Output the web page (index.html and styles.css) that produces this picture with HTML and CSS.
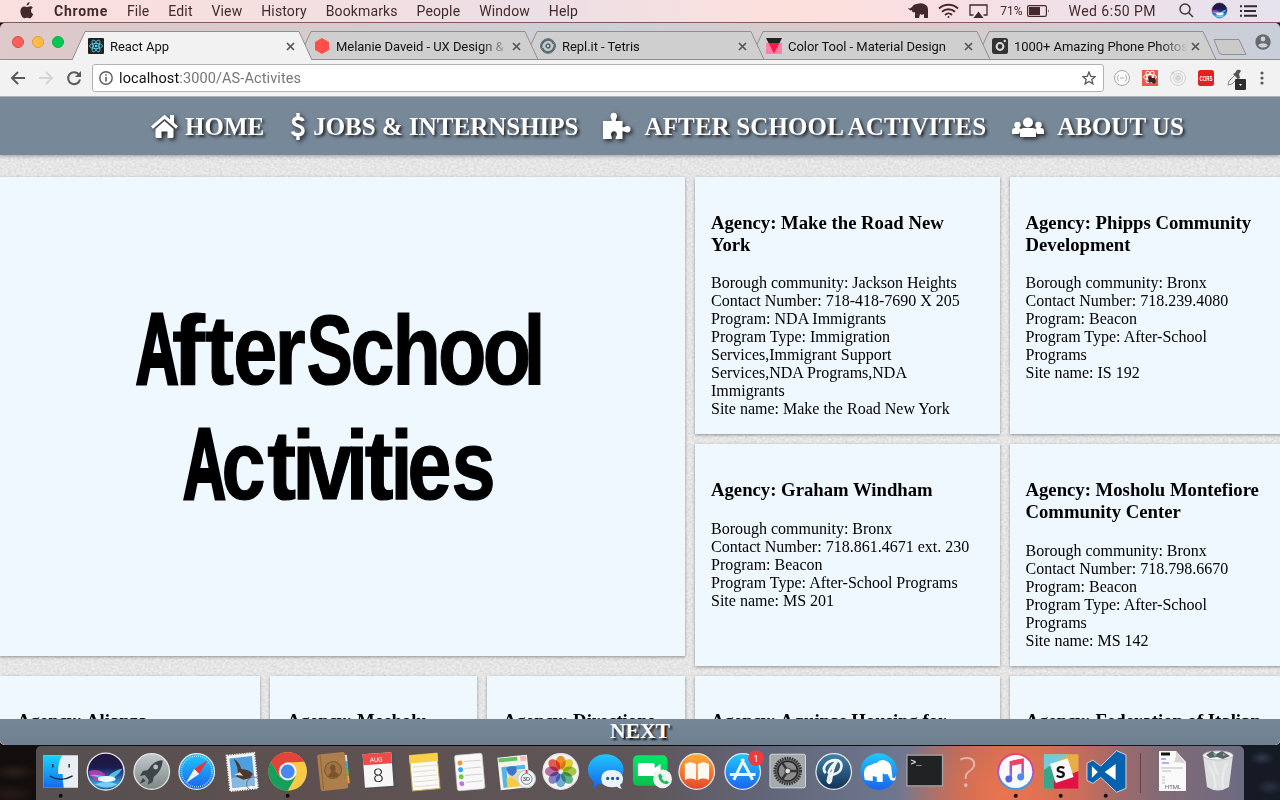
FILE: index.html
```html
<!DOCTYPE html>
<html lang="en">
<head>
<meta charset="utf-8">
<title>React App</title>
<link rel="stylesheet" href="styles.css">
</head>
<body>
<div class="desktop">
  <header class="menubar">
    <svg class="apple" width="14" height="17" viewBox="0 0 14 17"><path d="M9.600 0C9.700 1.800 8.300 3.500 6.600 3.600 6.400 2 7.900.3 9.600 0zM12.800 5.700C11.500 6.500 11 7.400 11 8.700c0 1.500.8 2.600 2.200 3.200-.7 2-2.100 4.400-3.600 4.400-1 0-1.400-.6-2.600-.6s-1.700.6-2.600.6C2.500 16.300.4 12.500.4 9.300c0-3 1.900-4.900 3.900-4.900 1.100 0 1.900.7 2.800.7.800 0 1.700-.8 3.200-.8 1 0 2 .5 2.500 1.400z" fill="#43292b"/></svg>
    <nav class="menus"><b>Chrome</b><span>File</span><span>Edit</span><span>View</span><span>History</span><span>Bookmarks</span><span>People</span><span>Window</span><span>Help</span></nav>
    <div class="status">
      <svg width="21" height="16" viewBox="0 0 21 16"><path d="M0 5c2 1 3 0 4-1 1-2 3-3 5-3 2-1 5-1 7 0 3 1 4 3 4 6v8h-4v-4c-1 1-3 1-4 0l-1 4H7V9C5 10 4 9 4 7 3 8 1 7 0 5z" fill="#43292b"/></svg>
      <svg width="21" height="16" viewBox="0 0 21 16" fill="none" stroke="#43292b" stroke-width="1.900"><path d="M1 5.500a14 14 0 0 1 19 0M4 8.800a9.500 9.500 0 0 1 13 0M7 12a5 5 0 0 1 7 0"/><circle cx="10.500" cy="14" r="1" fill="#43292b" stroke="none"/></svg>
      <svg width="19" height="16" viewBox="0 0 19 16"><path d="M4.500 12H1V2h17v10h-3.500" fill="none" stroke="#43292b" stroke-width="1.300"/><path d="M9.500 8.500l5 6.500h-10z" fill="#43292b"/></svg>
      <span class="pct">71%</span>
      <svg class="batt" width="23" height="12" viewBox="0 0 23 12"><rect x=".6" y=".6" width="18.800" height="10.800" rx="1.500" fill="none" stroke="#43292b" stroke-width="1.200"/><path d="M2 2h11v8H2zM21 4q1.500 2 0 4z" fill="#43292b"/></svg>
      <span class="clock">Wed 6:50 PM</span>
      <svg class="search" width="15" height="15" viewBox="0 0 15 15" fill="none" stroke="#43373c" stroke-width="1.500"><circle cx="6" cy="6" r="5"/><path d="M9.500 9.500l4.500 4.500"/></svg>
      <svg class="siri" width="17" height="17" viewBox="0 0 40 40"><use href="#siri"/></svg>
      <svg width="19" height="12" viewBox="0 0 19 12"><path d="M5 1.200h13M5 6h12M5 10.800h13M1 1.200h2M1 6h2M1 10.800h2" stroke="#37272f" stroke-width="1.900"/></svg>
    </div>
  </header>

  <section class="window">
    <div class="tabstrip">
      <svg class="tabshapes" width="1280" height="37" viewBox="0 0 1280 37" stroke="#908f90">
        <path d="M0 36.500h1280" />
        <g fill="#cfcfcf">
          <path d="M976 36.500L989 8.500h214l13 28z"/>
          <path d="M750 36.500L763 8.500h214l13 28z"/>
          <path d="M524 36.500L537 8.500h214l13 28z"/>
          <path d="M298 36.500L311 8.500h214l13 28z"/>
        </g>
        <path d="M72 37L85 8.500h214l13 28.500" fill="#f2f2f2"/>
        <path d="M1214 16.500h25l7 15h-24q-2 0-3-2z" fill="#cbcaca"/>
      </svg>
      <div class="lights"><i class="red"></i><i class="amber"></i><i class="green"></i></div>
      <div class="tabs">
        <div class="tab"><svg width="16" height="16" viewBox="0 0 16 16"><rect width="16" height="16" rx="1" fill="#222"/><g fill="none" stroke="#61dafb" stroke-width=".8"><ellipse cx="8" cy="8" rx="6.500" ry="2.600"/><ellipse cx="8" cy="8" rx="6.500" ry="2.600" transform="rotate(60 8 8)"/><ellipse cx="8" cy="8" rx="6.500" ry="2.600" transform="rotate(120 8 8)"/></g><circle cx="8" cy="8" r="1.300" fill="#61dafb"/></svg><span>React App</span><svg class="x" width="9" height="9" viewBox="0 0 9 9"><path d="M1 1l7 7M8 1L1 8"/></svg></div>
        <div class="tab"><svg width="16" height="16" viewBox="0 0 16 16"><path d="M8 0l7 4v8l-7 4-7-4V4z" fill="#ff4f4b"/></svg><span class="fade">Melanie Daveid - UX Design &amp;</span><svg class="x" width="9" height="9" viewBox="0 0 9 9"><path d="M1 1l7 7M8 1L1 8"/></svg></div>
        <div class="tab"><svg width="16" height="16" viewBox="0 0 16 16" fill="none" stroke="#56666f"><circle cx="8" cy="8" r="7.300" fill="#c3cacd" stroke-width="1"/><circle cx="8" cy="8" r="1.800" fill="#fff" stroke-width="1.700"/><path d="M1.500 10a7 7 0 0 1 8-8 6 6 0 0 1 4 4M14.500 6a7 7 0 0 1-8 8 6 6 0 0 1-4-4" stroke-width="1.800"/></svg><span>Repl.it - Tetris</span><svg class="x" width="9" height="9" viewBox="0 0 9 9"><path d="M1 1l7 7M8 1L1 8"/></svg></div>
        <div class="tab"><svg width="16" height="16" viewBox="0 0 16 16"><path d="M0 5h16v11H0z" fill="#ff80ab"/><path d="M0 0h16l-2.500 5h-11z" fill="#212121"/><path d="M2.500 5h11L8 15.500z" fill="#ff1744"/></svg><span>Color Tool - Material Design</span><svg class="x" width="9" height="9" viewBox="0 0 9 9"><path d="M1 1l7 7M8 1L1 8"/></svg></div>
        <div class="tab"><svg width="16" height="16" viewBox="0 0 16 16"><rect width="16" height="16" rx="2.500" fill="#333"/><circle cx="8" cy="8.500" r="3.400" fill="none" stroke="#ddd" stroke-width="2"/><circle cx="12.800" cy="3" r="1.200" fill="#ddd"/></svg><span class="fade">1000+ Amazing Phone Photos</span><svg class="x" width="9" height="9" viewBox="0 0 9 9"><path d="M1 1l7 7M8 1L1 8"/></svg></div>
      </div>
      <svg class="profile" width="16" height="16" viewBox="0 0 16 16"><circle cx="8" cy="8" r="7.700" fill="#686a6e"/><circle cx="8" cy="5" r="2.400" fill="#ccd0d8"/><path d="M3.300 11.500c1-3 8.400-3 9.400 0-2 2.700-7.400 2.700-9.400 0z" fill="#ccd0d8"/></svg>
    </div>

    <div class="toolbar">
      <svg class="navicons" width="76" height="18" viewBox="0 0 76 18" fill="none" stroke-width="2"><path d="M18 9H5M11 3L5 9l6 6" stroke="#5a5a5a"/><path d="M32 9h13M39 3l6 6-6 6" stroke="#d5d5d5"/><path d="M71.500 5A6 6 0 1 0 73 10.500" stroke="#5a5a5a"/><path d="M74 2v6h-6z" fill="#5a5a5a"/></svg>
      <div class="omnibox">
        <svg width="14" height="14" viewBox="0 0 14 14"><circle cx="7" cy="7" r="6.200" fill="none" stroke="#5a5a5a" stroke-width="1.400"/><path d="M7 6v4.500M7 3.200v1.600" stroke="#5a5a5a" stroke-width="1.600"/></svg>
        <span class="url">localhost<em>:3000/AS-Activites</em></span>
        <svg class="star" width="14" height="14" viewBox="0 0 14 14"><path d="M7 1l1.700 4.300 4.600.3-3.500 2.900 1.100 4.400L7 10.500l-3.900 2.400 1.100-4.400L.7 5.600l4.600-.3z" fill="none" stroke="#5a5a5a" stroke-width="1.300"/></svg>
      </div>
      <svg class="exts" width="176" height="24" viewBox="0 0 176 24">
        <circle cx="18" cy="12" r="7.500" fill="#fafafa" stroke="#a8a8a8"/><path d="M15 9q-1.500 0-1.500 3t1.500 3M21 9q1.500 0 1.500 3T21 15M16 12h4" fill="none" stroke="#aaa" stroke-width=".9"/>
        <path d="M38 4h16v16H38z" fill="#ed5948"/><g fill="none" stroke="#fff"><ellipse cx="46" cy="11" rx="6.500" ry="2.500"/><ellipse cx="46" cy="11" rx="6.500" ry="2.500" transform="rotate(60 46 11)"/><ellipse cx="46" cy="11" rx="6.500" ry="2.500" transform="rotate(120 46 11)"/></g><path d="M44 11l2-1 2 2 3 0 1 4-2 2-3-2-2 1z" fill="#392426"/>
        <g fill="none" stroke="#d4d4d4"><circle cx="74" cy="12" r="7.500"/><circle cx="74" cy="12" r="4.500"/><circle cx="74" cy="12" r="2.500" fill="#d4d4d4"/></g><circle cx="69" cy="7" r="1.500" fill="#ccc"/>
        <rect x="94" y="4" width="16" height="16" rx="2.500" fill="#e3221e"/><text x="95.500" y="15" textLength="13" lengthAdjust="spacingAndGlyphs" class="cors">CORS</text>
        <path d="M124 19l1-4 6-6 3 3-6 6z" fill="#eee" stroke="#888"/><path d="M129 8l2-1 2-3q3-1 4 1l-2 3 1 4-2 1z" fill="#555"/><rect x="131" y="13" width="11" height="11" rx="1" fill="#2d2d2d"/><path d="M135 18h3l-1.500 2z" fill="#fff"/>
        <g fill="#5a5a5a"><circle cx="158" cy="7" r="1.600"/><circle cx="158" cy="12" r="1.600"/><circle cx="158" cy="17" r="1.600"/></g>
      </svg>
    </div>

    <main class="page">
      <svg class="paper" width="1280" height="648"><filter id="grain" x="0" y="0" width="100%" height="100%" color-interpolation-filters="sRGB"><feTurbulence type="fractalNoise" baseFrequency=".35 .45" numOctaves="3" seed="8"/><feColorMatrix values=".13 .04 0 0 .815  .13 .04 0 0 .815  .13 .04 0 0 .815  0 0 0 0 1"/></filter><rect width="1280" height="648" filter="url(#grain)"/></svg>
      <nav class="sitenav">
        <a class="n1"><svg width="28" height="25" viewBox="0 0 28 25" fill="#fff"><path d="M13.500 7l9 8v7.500q0 1.500-1.500 1.500h-4.500v-6.500h-6V24H6q-1.500 0-1.500-1.500V15z"/><path d="M1 13.500L13.500 2.800 26 13.500" fill="none" stroke="#fff" stroke-width="3"/><path d="M19 1h4v9l-4-3z"/></svg><span>HOME</span></a>
        <a class="n2"><svg width="14" height="27" viewBox="0 0 14 27"><path d="M12 8C11 4.500 3 4 2.500 8.500 2.500 14 12 11.500 12 17.500 12 23 3 23 1.500 18.500M7 0v5M7 22v5" fill="none" stroke="#fff" stroke-width="3.400"/></svg><span>JOBS &amp; INTERNSHIPS</span></a>
        <a class="n3"><svg width="29" height="28" viewBox="0 0 29 28"><path d="M1 9h8.500c1-1-1-2.500-1-5 0-4.500 6.500-4.500 6.500 0 0 2.500-2 4-1 5h6.500v6c1.500 1 3-1 5-1 4 0 4 6.500 0 6.500-2 0-3.500-2-5-1V27h-6.500c-1-1.500 1-3 1-4.500 0-4.500-6-4.500-6 0 0 1.500 1.500 3 .5 4.500H1z" fill="#fff"/></svg><span>AFTER SCHOOL ACTIVITES</span></a>
        <a class="n4"><svg width="32" height="21" viewBox="0 0 32 21" fill="#fff"><circle cx="5.500" cy="8" r="3.200"/><circle cx="26.500" cy="8" r="3.200"/><circle cx="16" cy="5.500" r="5"/><path d="M0 17v-3q0-3 3-3h4l2 1-2 5zM32 17v-3q0-3-3-3h-4l-2 1 2 5zM8 20v-5q0-4 4-4h8q4 0 4 4v5z"/></svg><span>ABOUT US</span></a>
      </nav>
      <div class="board">
        <div class="left">
          <article class="card hero">
            <svg width="685" height="479" viewBox="0 177 685 479" class="title">
              <g transform="scale(.8 1)"><text y="384" x="170"><tspan class="cap" textLength="53" lengthAdjust="spacingAndGlyphs">A</tspan><tspan x="215" textLength="41" lengthAdjust="spacingAndGlyphs">f</tspan><tspan x="256.500" textLength="36" lengthAdjust="spacingAndGlyphs">t</tspan><tspan x="291.500 343.500">er</tspan><tspan x="383" textLength="58" lengthAdjust="spacingAndGlyphs">S</tspan><tspan x="438 490.500 547.500 603.500 654.500">chool</tspan></text>
              <text y="499" x="229"><tspan class="cap" textLength="53" lengthAdjust="spacingAndGlyphs">A</tspan><tspan x="277">c</tspan><tspan x="334" textLength="36" lengthAdjust="spacingAndGlyphs">t</tspan><tspan x="365.500 385 432.500">ivi</tspan><tspan x="456" textLength="36" lengthAdjust="spacingAndGlyphs">t</tspan><tspan x="488 509.500 564.500">ies</tspan></text></g>
            </svg>
          </article>
          <div class="trio">
            <article class="card"><h3>Agency: Alianza</h3></article>
            <article class="card"><h3>Agency: Mosholu</h3></article>
            <article class="card"><h3>Agency: Directions</h3></article>
          </div>
        </div>
        <div class="right">
          <article class="card top"><h3>Agency: Make the Road New York</h3><p>Borough community: Jackson Heights<br>Contact Number: 718-418-7690 X 205<br>Program: NDA Immigrants<br>Program Type: Immigration<br>Services,Immigrant Support<br>Services,NDA Programs,NDA<br>Immigrants<br>Site name: Make the Road New York</p></article>
          <article class="card top"><h3>Agency: Phipps Community Development</h3><p>Borough community: Bronx<br>Contact Number: 718.239.4080<br>Program: Beacon<br>Program Type: After-School<br>Programs<br>Site name: IS 192</p></article>
          <article class="card low"><h3>Agency: Graham Windham</h3><p>Borough community: Bronx<br>Contact Number: 718.861.4671 ext. 230<br>Program: Beacon<br>Program Type: After-School Programs<br>Site name: MS 201</p></article>
          <article class="card low"><h3>Agency: Mosholu Montefiore Community Center</h3><p>Borough community: Bronx<br>Contact Number: 718.798.6670<br>Program: Beacon<br>Program Type: After-School<br>Programs<br>Site name: MS 142</p></article>
          <article class="card"><h3>Agency: Aquinas Housing for</h3></article>
          <article class="card"><h3>Agency: Federation of Italian</h3></article>
        </div>
      </div>
      <footer class="next">NEXT</footer>
    </main>
  </section>

  <footer class="dock">
    <svg width="0" height="0" class="defs"><defs>
      <linearGradient id="sg" x2="0" y2="1"><stop stop-color="#241540"/><stop offset=".4" stop-color="#1c1c4c"/><stop offset=".6" stop-color="#2b4f9e"/><stop offset=".85" stop-color="#2ea4dc"/><stop offset="1" stop-color="#12528f"/></linearGradient>
      <linearGradient id="blue" x2="0" y2="1"><stop stop-color="#1fc8fb"/><stop offset="1" stop-color="#1a64ee"/></linearGradient>
      <linearGradient id="org" x2="0" y2="1"><stop stop-color="#fdae36"/><stop offset="1" stop-color="#e4462a"/></linearGradient>
      <linearGradient id="gray" x2="0" y2="1"><stop stop-color="#c2cacc"/><stop offset="1" stop-color="#7d8788"/></linearGradient>
      <linearGradient id="navy" x2="0" y2="1"><stop stop-color="#4182a8"/><stop offset="1" stop-color="#123254"/></linearGradient>
      <linearGradient id="grn" x2="0" y2="1"><stop stop-color="#06e667"/><stop offset="1" stop-color="#09c04d"/></linearGradient>
      <linearGradient id="note" x2="0" y2="1"><stop stop-color="#fb3f5c"/><stop offset=".5" stop-color="#b64bcf"/><stop offset="1" stop-color="#25a8f5"/></linearGradient>
      <linearGradient id="face" x2="0" y2="1"><stop stop-color="#16d5fd"/><stop offset="1" stop-color="#1669ee"/></linearGradient>
      <g id="siri"><circle cx="20" cy="20" r="18.700" fill="url(#sg)" stroke="#e6e6ea" stroke-width="1.300"/><path d="M2.500 20q9-4 17 3-2 8-8 7-6-2-9-10z" fill="#d13fb5" opacity=".8"/><path d="M37 17q-9 2-16 9-9-4-18-2 8 0 16 6 12-3 18-13z" fill="#59e0f0" opacity=".8"/><ellipse cx="21" cy="27.500" rx="9" ry="3" fill="#eefbff"/><path d="M9 33q12-5 23 0-11 7-23 0z" fill="#8fd9f7" opacity=".8"/></g>
    </defs></svg>
    <div class="apps">
      <svg viewBox="0 0 46 54"><path d="M5.500 9h35v33h-35z" fill="#e9eef5"/><path d="M5.500 9h19q-5 9-4 19h4.500q0 8 1 14H5.500z" fill="url(#face)"/><path d="M12 30q11 7 23 0M15 18v3.500M31.500 18v3.500" fill="none" stroke="#152634" stroke-width="1.400"/><circle class="dot" cx="23" cy="50" r="2"/></svg>
      <svg viewBox="0 0 46 54"><use href="#siri" x="3" y="5.500"/></svg>
      <svg viewBox="0 0 46 54"><circle class="rim" cx="23" cy="25.500" r="18" fill="url(#gray)"/><path d="M34 14q-9 0-15 10l-5 1-3 5 5-1 4 5-1 5 5-3 1-5q9-7 9-17zM14 32l-3 6 6-3z" fill="#3f4447"/><circle cx="27" cy="21" r="2.500" fill="#b5bcbe"/></svg>
      <svg viewBox="0 0 46 54"><circle class="rim" cx="23" cy="25.500" r="18" fill="url(#blue)"/><circle cx="23" cy="25.500" r="15.500" fill="none" stroke="#c9efff" stroke-width="1.500" stroke-dasharray=".7 1.300"/><path d="M34 14L20.500 23l5 5z" fill="#f0313a"/><path d="M12 37l8.500-14 5 5z" fill="#f3f3f3"/></svg>
      <svg viewBox="0 0 46 54"><g transform="rotate(-6 22 26)"><path d="M8.500 8h28v36h-28z" fill="#f6f6f4" stroke="#eee" stroke-width="2" stroke-dasharray="1.500 1"/><path d="M11 11h23v30H11z" fill="#4f9ede"/><path d="M11 31h23v10H11z" fill="#87b9df"/><path d="M15 12q5 2 7 11 7 1 11 6l-3 4-7 1-7-4 2-4q1-7-3-14z" fill="#4b382e"/><path d="M14 28l6-2 3 4z" fill="#e4d7b5"/></g><circle cx="34" cy="38" r="7" fill="none" stroke="#4c5260" opacity=".65"/></svg>
      <svg viewBox="0 0 46 54"><circle cx="23" cy="25.500" r="19.500" fill="#f9ca48"/><path d="M6.100 15.700A19.500 19.500 0 0 1 39.900 15.700L23 16.500 14.500 30.500z" fill="#e2433b"/><path d="M6.100 15.700A19.500 19.500 0 0 0 23 45l8-14.500-16.500 0z" fill="#169f5c"/><circle cx="23" cy="25.500" r="9" fill="#f4f4f4"/><circle cx="23" cy="25.500" r="7" fill="#4688f0"/><circle class="dot" cx="23" cy="50" r="2"/></svg>
      <svg viewBox="0 0 46 54"><g transform="rotate(-6 22 26)"><path d="M33 10h5v7h-5z" fill="#ddd"/><path d="M33 17h5v7h-5z" fill="#3aaee0"/><path d="M33 24h5v7h-5z" fill="#58b95a"/><path d="M33 31h5v8h-5z" fill="#e8a03c"/><rect x="8" y="7" width="28" height="37" rx="2" fill="#ad7f4d"/><path d="M11 8v35" stroke="#8e6437"/><circle cx="22.500" cy="24" r="8.500" fill="#a37443" stroke="#7d572f"/><path d="M17 30q1-3 4-4-2-3-1-6 2.500-3 5 0 1 3-1 6 3 1 4 4-5 4-11 0z" fill="#79532b"/></g></svg>
      <svg viewBox="0 0 46 54"><g transform="rotate(-4 23 26)"><path d="M8 8h32v35H8z" fill="#4d5358"/><path d="M8 7h29v34H8z" fill="#f7f7f7"/><path d="M8 7h29v11H8z" fill="#ec4d49"/><text x="15" y="15.500" class="aug">AUG</text><text x="17" y="36" class="eight">8</text></g></svg>
      <svg viewBox="0 0 46 54"><g transform="rotate(-5 23 26)"><path d="M9 8h28v36H9z" fill="#fbfaf5" stroke="#bba453"/><path d="M8.500 8h29v8h-29z" fill="#f8cf45"/><path d="M11 20h24M11 25h24M11 30h24M11 35h24M11 40h24" stroke="#d8d6cf" stroke-width=".8"/></g></svg>
      <svg viewBox="0 0 46 54"><g transform="rotate(-5 23 26)"><rect x="9" y="8" width="28" height="36" rx="2" fill="#f8f8f8" stroke="#ccc" stroke-width=".7"/><path d="M18 15h17M18 22h17M18 29h17M18 36h17" stroke="#d2d2d2"/><circle cx="14" cy="16" r="2.500" fill="#f79239"/><circle cx="14" cy="23" r="2.500" fill="#31a8ef"/><circle cx="14" cy="30" r="2.500" fill="#67d145"/><circle cx="14" cy="37" r="2.500" fill="#c774dd"/></g></svg>
      <svg viewBox="0 0 46 54"><g transform="rotate(-6 20 26)"><path d="M6 10h30v33H6z" fill="#f6f3e9"/><path d="M7 11h19v4H7z" fill="#63c266"/><path d="M29 11h6v5h-6z" fill="#f2bcc5"/><path d="M9 20h24v4H14v17H9z" fill="#53b4e9"/><path d="M15 25h16v16H15z" fill="#dfd5ba"/><path d="M13 32l5-1 11 10H13z" fill="#f8cc3d"/><path d="M14 21q5-2 10 0v5q-3 4-5 4-5-2-5-9z" fill="#3e76c8"/></g><circle cx="34" cy="33" r="9" fill="#eff4f6" stroke="#c6cbd0"/><circle cx="34" cy="33" r="5.500" fill="none" stroke="#54758c" stroke-width=".8"/><text x="30" y="35.500" class="three">3D</text><path d="M33 24h2v3h-2z" fill="#e04040"/></svg>
      <svg viewBox="0 0 46 54"><circle class="rim" cx="23" cy="25.500" r="18" fill="#f4f3ef"/><g class="petals"><ellipse cx="23" cy="16.500" rx="5" ry="7" fill="#f79431"/><ellipse cx="23" cy="16.500" rx="5" ry="7" fill="#e8d63b" transform="rotate(45 23 25.500)"/><ellipse cx="23" cy="16.500" rx="5" ry="7" fill="#a9cf50" transform="rotate(90 23 25.500)"/><ellipse cx="23" cy="16.500" rx="5" ry="7" fill="#65b990" transform="rotate(135 23 25.500)"/><ellipse cx="23" cy="16.500" rx="5" ry="7" fill="#73b4e4" transform="rotate(180 23 25.500)"/><ellipse cx="23" cy="16.500" rx="5" ry="7" fill="#8a88cf" transform="rotate(225 23 25.500)"/><ellipse cx="23" cy="16.500" rx="5" ry="7" fill="#c275b3" transform="rotate(270 23 25.500)"/><ellipse cx="23" cy="16.500" rx="5" ry="7" fill="#eb615c" transform="rotate(315 23 25.500)"/></g></svg>
      <svg viewBox="0 0 46 54"><path d="M23 8c10 0 18 7 18 15.500S33 39 23 39q-4 0-7-1-3 4-7 4 3-3 2-6-6-5-6-12.500C5 15 13 8 23 8z" fill="url(#blue)"/><path d="M29.500 24c7 0 11 4 11 9q0 4-3 6 0 2 2 4-3 0-5-2-16 2-16-8 0-9 11-9z" fill="#e8f4fa"/><g fill="#1e5688"><circle cx="25" cy="32.500" r="1.600"/><circle cx="30" cy="32.500" r="1.600"/><circle cx="35" cy="32.500" r="1.600"/></g></svg>
      <svg viewBox="0 0 46 54"><rect x="4" y="9" width="35" height="31" rx="5" fill="url(#grn)"/><path d="M9 19q0-2 2-2h13q2 0 2 2v3l6-4v13l-6-4v3H9z" fill="#fff"/><circle cx="34" cy="33" r="9.500" fill="#f2f3f2"/><path d="M29.500 29.500l2-2 2.500 3-1 2 3 3 2-1 2.500 2-2 2q-8-1-9-9z" fill="#17be57"/></svg>
      <svg viewBox="0 0 46 54"><circle class="rim" cx="23" cy="25.500" r="18" fill="url(#org)"/><path d="M11 18q6-4 11.500 0v16q-6-3-11.500 0zM24 18q6-4 11.500 0v16q-6-3-11.500 0z" fill="#fff8ee"/></svg>
      <svg viewBox="0 0 46 54"><circle class="rim" cx="23" cy="25.500" r="18" fill="url(#blue)"/><path d="M24 13L14 34M22 13l11 21M10 28.500h26" stroke="#e9f8ff" stroke-width="3" fill="none"/><circle cx="36.500" cy="12" r="8" fill="#eb3c40"/><text x="34" y="15.500" class="badge">1</text></svg>
      <svg viewBox="0 0 46 54"><rect x="5" y="8" width="36" height="34" rx="2" fill="#a5aaac" stroke="#d2d7d9"/><circle cx="23" cy="25" r="13" fill="#6c6d6e" stroke="#333" stroke-width="3" stroke-dasharray="1.500 1"/><circle cx="23" cy="25" r="10" fill="#8b8c8b" stroke="#222" stroke-width="1.500"/><path d="M17 16l6 9 10 0M23 25l-6 9" stroke="#333" stroke-width="2.500" fill="none"/><circle cx="23" cy="25" r="3" fill="#ddd" stroke="#333"/></svg>
      <svg viewBox="0 0 46 54"><circle class="rim" cx="23" cy="25.500" r="18" fill="url(#navy)"/><path d="M15 27c-5-5 1-13 10-13 8 0 8 11-1 14q-5 2-6-1c0-4 4-8 8-12-4 6-5 14-6 20q-2 4-3 0l2-9" fill="none" stroke="#f2f6f8" stroke-width="2.700"/></svg>
      <svg viewBox="0 0 46 54"><circle cx="23" cy="25.500" r="18.500" fill="url(#blue)"/><path d="M9 34c-2-7-1-14 6-15q3-2 6-2 4-5 10-2 5 2 5 9l1 8q3 1 3-3 1 8-5 5l-3-6q-4 1-5-1v9h-6v-5l-4-1v5z" fill="#fff"/></svg>
      <svg viewBox="0 0 46 54"><path d="M5 9h36v31H5z" fill="#202224" stroke="#a3a5a8" stroke-width="1.300"/><text x="8.500" y="19" class="prompt">&gt;_</text></svg>
      <svg viewBox="0 0 46 54"><text x="12" y="41" class="help">?</text></svg>
      <svg viewBox="0 0 46 54"><circle cx="23" cy="25.500" r="17.800" fill="#fafafc" stroke="url(#note)" stroke-width="2"/><path d="M18 33V16l12-2.500v17" stroke="url(#note)" stroke-width="2.500" fill="none"/><path d="M18 15l12-2.500v5L18 20z" fill="#ee4567"/><circle cx="16" cy="33" r="3.500" fill="#5b62df"/><circle cx="28" cy="31" r="3.500" fill="#4f8bee"/><circle class="dot" cx="23" cy="50" r="2"/></svg>
      <svg viewBox="0 0 46 54"><path d="M6 8h35v35H6z" fill="#e9ad45"/><path d="M6 8h25l-15 10-10 9z" fill="#74cbd8"/><path d="M6 24l9-6 8 25H6z" fill="#37a58a"/><path d="M16 35l25-10v18H16z" fill="#e11346"/><path d="M12 18l18-6 6 19-18 6z" fill="#f9f9f9"/><text x="18" y="32" class="slack">S</text><circle class="dot" cx="23" cy="50" r="2"/></svg>
      <svg viewBox="0 0 46 54"><path d="M34 4.500l9.500 4v34l-9.500 4-16-15-8 6-6-3V17l6-3 8 6z" fill="#0662ae" stroke="#d2d2dc" stroke-width="1"/><path d="M9 20v12l6-6zM33 18L22 26l11 8z" fill="#fff"/><circle class="dot" cx="23" cy="50" r="2"/></svg>
    </div>
    <i class="sep"></i>
    <svg width="29" height="54" viewBox="0 0 29 54" class="doc"><path d="M1 5h17l10 11v29H1z" fill="#fafafa"/><path d="M18 5q0 8-2 11 8 0 12 2z" fill="#d5d5d5"/><path d="M3 8h9" stroke="#111" stroke-width="3"/><path d="M3 13h5M4 17h7" stroke="#5c69d8"/><path d="M3 22h22M4 25h9M4 31h3M4 34h3M4 37h3" stroke="#aaa" stroke-width=".8"/><text x="7" y="43" class="html">HTML</text></svg>
    <svg width="34" height="54" viewBox="0 0 34 54" class="trash"><path d="M2 9l4 32q11 7 22 0l4-32z" fill="#dedfe1"/><path d="M8 20q7 10 6 22M26 17q-6 10-4 25M12 16l5 13" stroke="#eaeaeb" stroke-width="2.500" fill="none"/><ellipse cx="17" cy="9.500" rx="15" ry="4.500" fill="#f3f3f3" stroke="#bfc2c4"/><path d="M5 9l6-4 4 3 6-3 8 5-7 3-6-2-7 1z" fill="#5c6165"/><path d="M12 7l4 1-2 3zM22 7l3 2-3 1z" fill="#46c7a4"/></svg>
  </footer>
</div>
</body>
</html>
```

FILE: styles.css
```css
* { box-sizing: border-box; }
body { margin: 0; overflow: hidden; }
svg { flex: none; display: block; }

.desktop {
  width: 1280px; height: 800px; overflow: hidden;
  display: flex; flex-direction: column;
  font-family: Roboto, sans-serif;
  background:
    radial-gradient(ellipse 22px 9px at 14px 772px, #2c1f1c, transparent),
    radial-gradient(ellipse 25px 10px at 10px 794px, #271b19, transparent),
    radial-gradient(ellipse 12px 7px at 1262px 758px, #323b4c, transparent),
    radial-gradient(ellipse 14px 8px at 1270px 787px, #2b3140, transparent),
    linear-gradient(90deg, #130e0d 0, #0a0908 50%, #151a25 97%);
}

.menubar {
  height: 23px; flex: none; display: flex; align-items: center;
  padding: 0 22px 1px 20px; color: #43292b; font-size: 14px;
  background: linear-gradient(90deg, #fadfdf 0, #f4dfe0 25%, #ecdfe6 42%, #fde0dc 62%, #f6dfe5 76%, #e6e2ee 100%);
  border-bottom: 1px solid #82575d;
}
.menus { display: flex; gap: 18.9px; margin-left: 20px; white-space: nowrap; }
.menus b { letter-spacing: .75px; }
.menus span { letter-spacing: .14px; }
.status { margin-left: auto; display: flex; align-items: center; }
.status svg + svg { margin-left: 9px; }
.status svg:nth-child(3) { margin-left: 10px; }
.pct { font-size: 12px; margin-left: 12px; letter-spacing: 0; }
.batt { margin-left: 4px; }
.clock { margin-left: 19px; letter-spacing: .45px; }
.search { margin-left: 23px; }
.status svg.siri { margin-left: 17px; }
.status svg.siri + svg { margin-left: 11px; }

.window { height: 722px; flex: none; overflow: hidden; border-radius: 5px; }
.tabstrip {
  position: relative; height: 37px; display: flex; align-items: flex-start;
  background: linear-gradient(90deg, #dfc9ca, #d5cbce 28%, #ccd0d7 48%, #dbcac9 66%, #c9cfd9);
}
.tabshapes { position: absolute; left: 0; top: 0; }
.lights { position: relative; display: flex; gap: 8px; padding: 13px 0 0 12px; width: 88px; }
.lights i { width: 12px; height: 12px; border-radius: 50%; }
.red { background: #fc605b; border: 1px solid #df4744; }
.amber { background: #fdbc49; border: 1px solid #df9c36; }
.green { background: #00ca53; border: 1px solid #10ab41; }
.tabs { position: relative; display: flex; padding-top: 15px; }
.tab { width: 226px; padding-right: 19px; display: flex; align-items: center; font-size: 13px; height: 16px; color: #111; letter-spacing: -.05px; white-space: nowrap; }
.tab span { width: 173px; margin-left: 6px; line-height: 15px; }
.tab .fade { -webkit-mask-image: linear-gradient(90deg, #000 145px, transparent 174px); mask-image: linear-gradient(90deg, #000 145px, transparent 174px); }
.x { margin-left: 4px; stroke: #555; stroke-width: 1.7; }
.profile { position: relative; margin: 11px 0 0 37px; }

.toolbar { height: 37px; display: flex; align-items: center; background: #f2f2f2; border-bottom: 1px solid #b3b2b2; }
.navicons { margin-left: 7px; }
.omnibox { margin-left: 9px; width: 1012px; height: 28px; background: #fff; border: 1px solid #b2b2b2; border-radius: 3px; display: flex; align-items: center; padding: 0 7px 0 6px; }
.url { margin-left: 6px; font-size: 14.5px; letter-spacing: .11px; color: #111; }
.url em { font-style: normal; color: #777; }
.star { margin-left: auto; }
.cors { font: bold 7px "Liberation Sans", sans-serif; fill: #fff; }

.page { position: relative; height: 648px; overflow: hidden; background: #e6e6e6; font-family: "Liberation Serif", serif; }
.paper { position: absolute; left: 0; top: 0; }
.sitenav {
  position: relative; height: 58px; background: #789; display: flex; align-items: center; padding: 2px 0 0 151px;
  color: #fff; font-size: 25px; font-weight: bold; box-shadow: 0 1px 4px rgba(0,0,0,.35);
}
.sitenav a { display: flex; align-items: center; white-space: nowrap; text-shadow: 2px 2px 3px #222; }
.sitenav svg { overflow: visible; filter: drop-shadow(2px 2px 2px #222); }
.sitenav a:nth-child(-n+3) svg { margin-top: -2px; }
.n1 svg { margin-right: 6px; }
.n2 { margin-left: 27px; }
.n2 svg { margin-right: 8px; }
.n3 { margin-left: 23px; letter-spacing: .12px; }
.n3 svg { margin-right: 14px; }
.n4 { margin-left: 26px; }
.n4 svg { margin-right: 13px; }

.board { position: relative; display: flex; gap: 10px; padding-top: 22px; }
.left { width: 685px; flex: none; }
.right { display: grid; grid-template-columns: 305px 300px; grid-template-rows: 257px 222px 100px; gap: 10px; }
.card { background: aliceblue; padding: 34px 30px 0 16px; color: #000; box-shadow: 0 1px 3px rgba(0,0,0,.38); }
.card h3 { margin: 0 0 18px; font-size: 18.72px; line-height: 22px; }
.card p { margin: 0; font-size: 16px; line-height: 18px; white-space: nowrap; }
.right .card:nth-child(even) { padding-left: 15.5px; }
.right .top, .right .low { padding-top: 35px; }
.low h3 { margin-bottom: 19px; }
.left .hero { height: 479px; padding: 0; }
.title { font: bold 99px "Liberation Sans", sans-serif; stroke: #000; stroke-width: 1.2; }
.title .cap { font-size: 101px; stroke-width: 4; }
.trio { display: grid; grid-template-columns: 260px 207px 198px; gap: 10px; margin-top: 20px; }
.trio .card { height: 100px; padding-right: 10px; }
.trio .card:not(:last-child) { padding-left: 17px; }
.next {
  position: absolute; left: 0; bottom: 0; width: 100%; height: 26px; text-align: center;
  background: linear-gradient(#768797, #6f8090); color: #fff; font-weight: bold; font-size: 21.6px; line-height: 25px;
  text-shadow: 2px 2px 2px #111;
}

.dock {
  height: 54px; width: 1208px; margin: 1px 0 0 36px; flex: none; display: flex; overflow: hidden; padding-left: 2px;
  border-radius: 5px 5px 0 0;
  background: radial-gradient(ellipse 110px 90px at 970px 48px, #e97450, rgba(233,116,80,0)), linear-gradient(90deg, #565050 0, #5e5050 22%, #5e5659 50%, #626578 60%, #6f7890 72%, #b1675b 77%, #cf6e54 81%, #b96a61 87%, #826a75 93%, #6c6b82 100%);
}
.defs { position: absolute; }
.apps { display: flex; }
.apps svg { width: 45.46px; height: 54px; overflow: visible; }
.rim { stroke: #e3e5e8; stroke-width: 1.3; }
.petals ellipse { mix-blend-mode: multiply; }
.dot { fill: #17090b; }
.sep { width: 1px; height: 40px; margin: 7px 0 0 11px; background: #694048; }
.doc { margin-left: 17px; }
.trash { margin-left: 14px; }
.aug { font-size: 6.5px; fill: #fff; }
.eight { font-size: 19px; font-weight: 300; fill: #222; }
.three { font-size: 6px; fill: #333; }
.badge { font-size: 9px; fill: #fff; }
.prompt { font: bold 9.5px "Liberation Mono", monospace; fill: #eee; }
.help { font: 300 43px "Open Sans", sans-serif; fill: #e2b4ac; }
.slack { font: 900 18px Lato, sans-serif; fill: #111; }
.html { font-size: 6px; fill: #666; }
```
